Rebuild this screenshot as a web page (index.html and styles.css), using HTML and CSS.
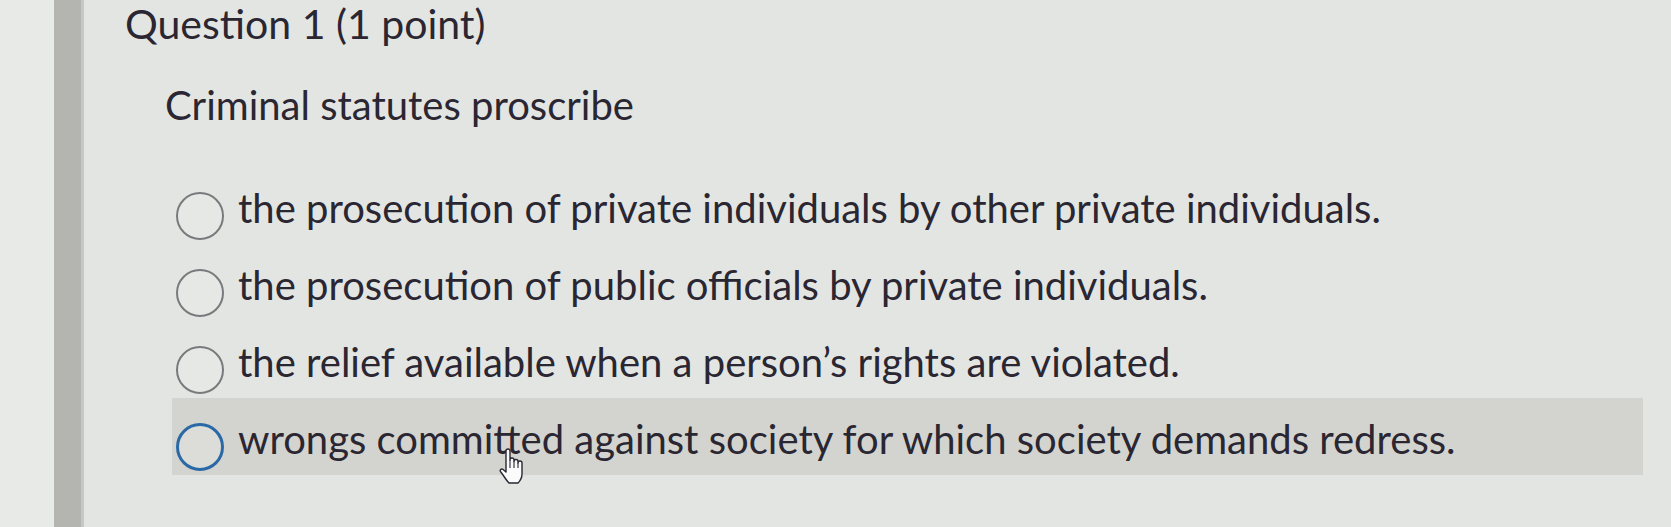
FILE: index.html
```html
<!DOCTYPE html>
<html>
<head>
<meta charset="utf-8">
<link rel="stylesheet" href="styles.css">
</head>
<body>
<div class="page">
  <div class="gutter"></div>
  <div class="rail"></div>
  <main class="content">
    <h1 class="title">Question 1 <span class="pts">(1 point)</span></h1>
    <p class="prompt">Criminal statutes proscribe</p>
    <ul class="options">
      <li class="option"><span class="radio"></span><span class="label">the prosecution of private individuals by other private individuals.</span></li>
      <li class="option"><span class="radio"></span><span class="label">the prosecution of public officials by private individuals.</span></li>
      <li class="option"><span class="radio"></span><span class="label">the relief available when a person’s rights are violated.</span></li>
      <li class="option hover"><span class="radio focus"></span><span class="label">wrongs committed against society for which society demands redress.</span>
        <svg class="cursor" width="28" height="38" viewBox="0 0 28 38">
          <path d="M8 4a2 2 0 0 1 4 0V13a2 2 0 0 1 4 0V14.5a2 2 0 0 1 4 0V16a2 2 0 0 1 4 0V27c0 4-2 7-4 9H11c-2-2-4-5-6-8L2.5 24.5c-1-1.5 0.8-3.2 2.3-2.2L8 25Z" fill="#fbfbfb" stroke="#2a2632" stroke-width="1.4" stroke-linejoin="round"/>
          <path d="M12 13V21M16 14.5V21M20 16V21" stroke="#2a2632" stroke-width="1.1"/>
        </svg>
      </li>
    </ul>
  </main>
</div>
</body>
</html>
```
FILE: styles.css
```css
html, body { margin: 0; padding: 0; }
body {
  width: 1671px;
  height: 527px;
  overflow: hidden;
  background: #e3e5e2;
  font-family: Lato, "Open Sans", sans-serif;
  color: #2a2632;
}
.page {
  display: flex;
  height: 527px;
}
.gutter {
  width: 54px;
  background: #e8eae7;
  flex: none;
}
.rail {
  width: 30px;
  background: #b4b5b1;
  border-right: 3px solid #c7c8c4;
  box-sizing: border-box;
  flex: none;
}
.content {
  flex: 1;
  padding-left: 41px;
}
.title {
  margin: 2px 0 0;
  font-size: 41px;
  font-weight: 400;
  line-height: 44px;
}
.prompt {
  margin: 35px 0 0 40px;
  font-size: 40px;
  line-height: 48px;
}
.options {
  list-style: none;
  margin: 38px 0 0 47px;
  padding: 0;
  width: 1471px;
}
.option {
  position: relative;
  display: flex;
  align-items: flex-start;
  height: 77px;
  padding-left: 4px;
  font-size: 40px;
}
.option.hover {
  background: #d3d4cf;
}
.radio {
  width: 44px;
  height: 44px;
  margin-top: 25px;
  border: 2px solid #7a7a7e;
  border-radius: 50%;
  flex: none;
  margin-right: 14px;
  background: #e6e8e5;
}
.option.hover .radio { background: #dcddd9; }
.radio.focus {
  border: 3px solid #2a69a6;
  width: 42px;
  height: 42px;
}
.label {
  margin-top: 17px;
  line-height: 48px;
  white-space: nowrap;
}
.cursor {
  position: absolute;
  left: 326px;
  top: 49px;
}
```
